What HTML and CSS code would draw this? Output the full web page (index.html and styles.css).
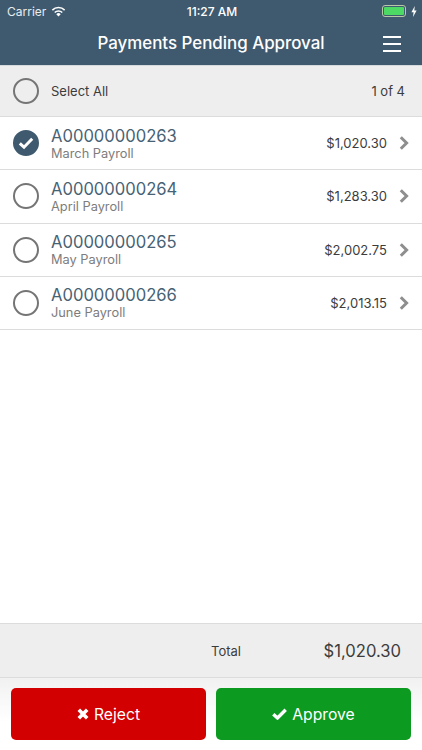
FILE: index.html
```html
<!DOCTYPE html>
<html lang="en">
<head>
<meta charset="utf-8">
<title>Payments Pending Approval</title>
<link rel="stylesheet" href="styles.css">
</head>
<body>
<div class="app">
  <header class="header">
    <div class="status">
      <div class="status-left">
        <span>Carrier</span>
        <svg class="wifi" viewBox="0 0 16 12" width="15" height="11"><path d="M8 11.5 5.6 8.9a3.4 3.4 0 0 1 4.8 0z" fill="#fff"/><path d="M3.9 7.1a5.8 5.8 0 0 1 8.2 0" fill="none" stroke="#fff" stroke-width="1.7"/><path d="M1.3 4.5a9.5 9.5 0 0 1 13.4 0" fill="none" stroke="#fff" stroke-width="1.7"/></svg>
      </div>
      <div class="status-time">11:27 AM</div>
      <div class="status-right">
        <span class="battery"><span class="battery-fill"></span></span>
        <svg viewBox="0 0 6 11" width="6" height="11"><path d="M3.8 0 0.4 6.2h2.2L2 11l3.6-6.6H3.3z" fill="#fff"/></svg>
      </div>
    </div>
    <div class="titlebar">
      <h1 class="title">Payments Pending Approval</h1>
      <div class="menu"><span></span><span></span><span></span></div>
    </div>
  </header>

  <div class="select-all">
    <span class="radio"></span>
    <span class="select-label">Select All</span>
    <span class="count">1 of 4</span>
  </div>

  <ul class="list">
    <li class="row">
      <span class="radio checked"><svg viewBox="0 0 16 14" width="16" height="14"><path d="M1.8 7.4 6 11.2 14.2 2.8" fill="none" stroke="#fff" stroke-width="3"/></svg></span>
      <div class="info"><div class="code">A00000000263</div><div class="name">March Payroll</div></div>
      <span class="amount">$1,020.30</span>
      <svg class="chev" viewBox="0 0 10 14" width="10" height="14"><path d="M1.8 1.2 7.6 7l-5.8 5.8" fill="none" stroke="#8e8e8e" stroke-width="3"/></svg>
    </li>
    <li class="row">
      <span class="radio"></span>
      <div class="info"><div class="code">A00000000264</div><div class="name">April Payroll</div></div>
      <span class="amount">$1,283.30</span>
      <svg class="chev" viewBox="0 0 10 14" width="10" height="14"><path d="M1.8 1.2 7.6 7l-5.8 5.8" fill="none" stroke="#8e8e8e" stroke-width="3"/></svg>
    </li>
    <li class="row">
      <span class="radio"></span>
      <div class="info"><div class="code">A00000000265</div><div class="name">May Payroll</div></div>
      <span class="amount">$2,002.75</span>
      <svg class="chev" viewBox="0 0 10 14" width="10" height="14"><path d="M1.8 1.2 7.6 7l-5.8 5.8" fill="none" stroke="#8e8e8e" stroke-width="3"/></svg>
    </li>
    <li class="row">
      <span class="radio"></span>
      <div class="info"><div class="code">A00000000266</div><div class="name">June Payroll</div></div>
      <span class="amount">$2,013.15</span>
      <svg class="chev" viewBox="0 0 10 14" width="10" height="14"><path d="M1.8 1.2 7.6 7l-5.8 5.8" fill="none" stroke="#8e8e8e" stroke-width="3"/></svg>
    </li>
  </ul>

  <div class="total">
    <span class="total-label">Total</span>
    <span class="total-value">$1,020.30</span>
  </div>

  <div class="actions">
    <button class="btn reject"><svg viewBox="0 0 12 12" width="12" height="12"><path d="M1.8 1.8l8.4 8.4M10.2 1.8l-8.4 8.4" fill="none" stroke="#fff" stroke-width="3.6"/></svg>Reject</button>
    <button class="btn approve"><svg viewBox="0 0 15 12" width="15" height="12"><path d="M1.3 6.2 5.5 10 13.7 1.8" fill="none" stroke="#fff" stroke-width="3.4"/></svg>Approve</button>
  </div>
</div>
</body>
</html>
```
FILE: styles.css
```css
* { box-sizing: border-box; }
html, body { margin: 0; padding: 0; }
body { font-family: Inter, "Liberation Sans", sans-serif; color: #3c3c3c; background: #fff; }
.app { width: 422px; height: 750px; display: flex; flex-direction: column; overflow: hidden; }

.header { height: 65px; background: #3f5a6e; color: #fff; flex: none; }
.status { height: 21px; display: grid; grid-template-columns: 1fr auto 1fr; align-items: center; padding: 1px 5px 0 7px; font-size: 12px; }
.status-left { display: flex; align-items: center; gap: 5px; color: #e8edf0; }
.status-time { font-weight: 500; }
.status-right { display: flex; align-items: center; justify-content: flex-end; gap: 5px; }
.battery { width: 24px; height: 12px; border: 1px solid #b9c9a8; border-radius: 3px; padding: 1px; display: block; }
.battery-fill { display: block; height: 100%; background: #4cd964; border-radius: 1px; }

.titlebar { height: 44px; position: relative; display: flex; align-items: center; justify-content: center; padding-bottom: 1px; }
.title { margin: 0; font-size: 16.9px; font-weight: 500; color: #fff; }
.menu { position: absolute; right: 21px; top: 15px; width: 18px; display: flex; flex-direction: column; gap: 5px; }
.menu span { height: 2px; background: #fff; display: block; }

.select-all { height: 52px; flex: none; background: #eeeeee; border-top: 1px solid #d5dadd; border-bottom: 1px solid #dcdcdc; display: flex; align-items: center; padding: 0 17px 0 13px; }
.select-label { margin-left: 12px; font-size: 13px; flex: 1; }
.count { font-size: 13px; }

.radio { width: 26px; height: 26px; border-radius: 50%; border: 2.4px solid #757575; flex: none; display: flex; align-items: center; justify-content: center; }
.radio.checked { background: #3f5a6e; border-color: #3f5a6e; }

.list { list-style: none; margin: 0; padding: 0; flex: 1; }
.row { height: 53.25px; border-bottom: 1px solid #dcdcdc; display: flex; align-items: center; padding: 0 13px; }
.info { margin-left: 12px; padding-top: 1px; flex: 1; }
.code { font-size: 16.6px; line-height: 19px; color: #476274; }
.name { font-size: 12.8px; line-height: 15px; color: #7d7d7d; }
.amount { font-size: 13px; color: #3c3c3c; }
.chev { margin-left: 12px; flex: none; }

.total { height: 55px; flex: none; background: #eeeeee; border-top: 1px solid #dcdcdc; border-bottom: 1px solid #dcdcdc; display: flex; align-items: center; padding: 1px 21px 0 211px; }
.total-label { flex: 1; font-size: 13px; }
.total-value { font-size: 16.6px; }

.actions { height: 72px; flex: none; display: flex; gap: 10px; padding: 10px 11px 0; background: linear-gradient(#f1f1f1, #fff 60%); }
.btn { flex: 1; height: 52px; border: 0; border-radius: 5px; color: #fff; font-family: inherit; font-size: 15.7px; display: flex; align-items: center; justify-content: center; gap: 5px; }
.reject { background: #d20000; }
.approve { background: #0c9a20; }
```
